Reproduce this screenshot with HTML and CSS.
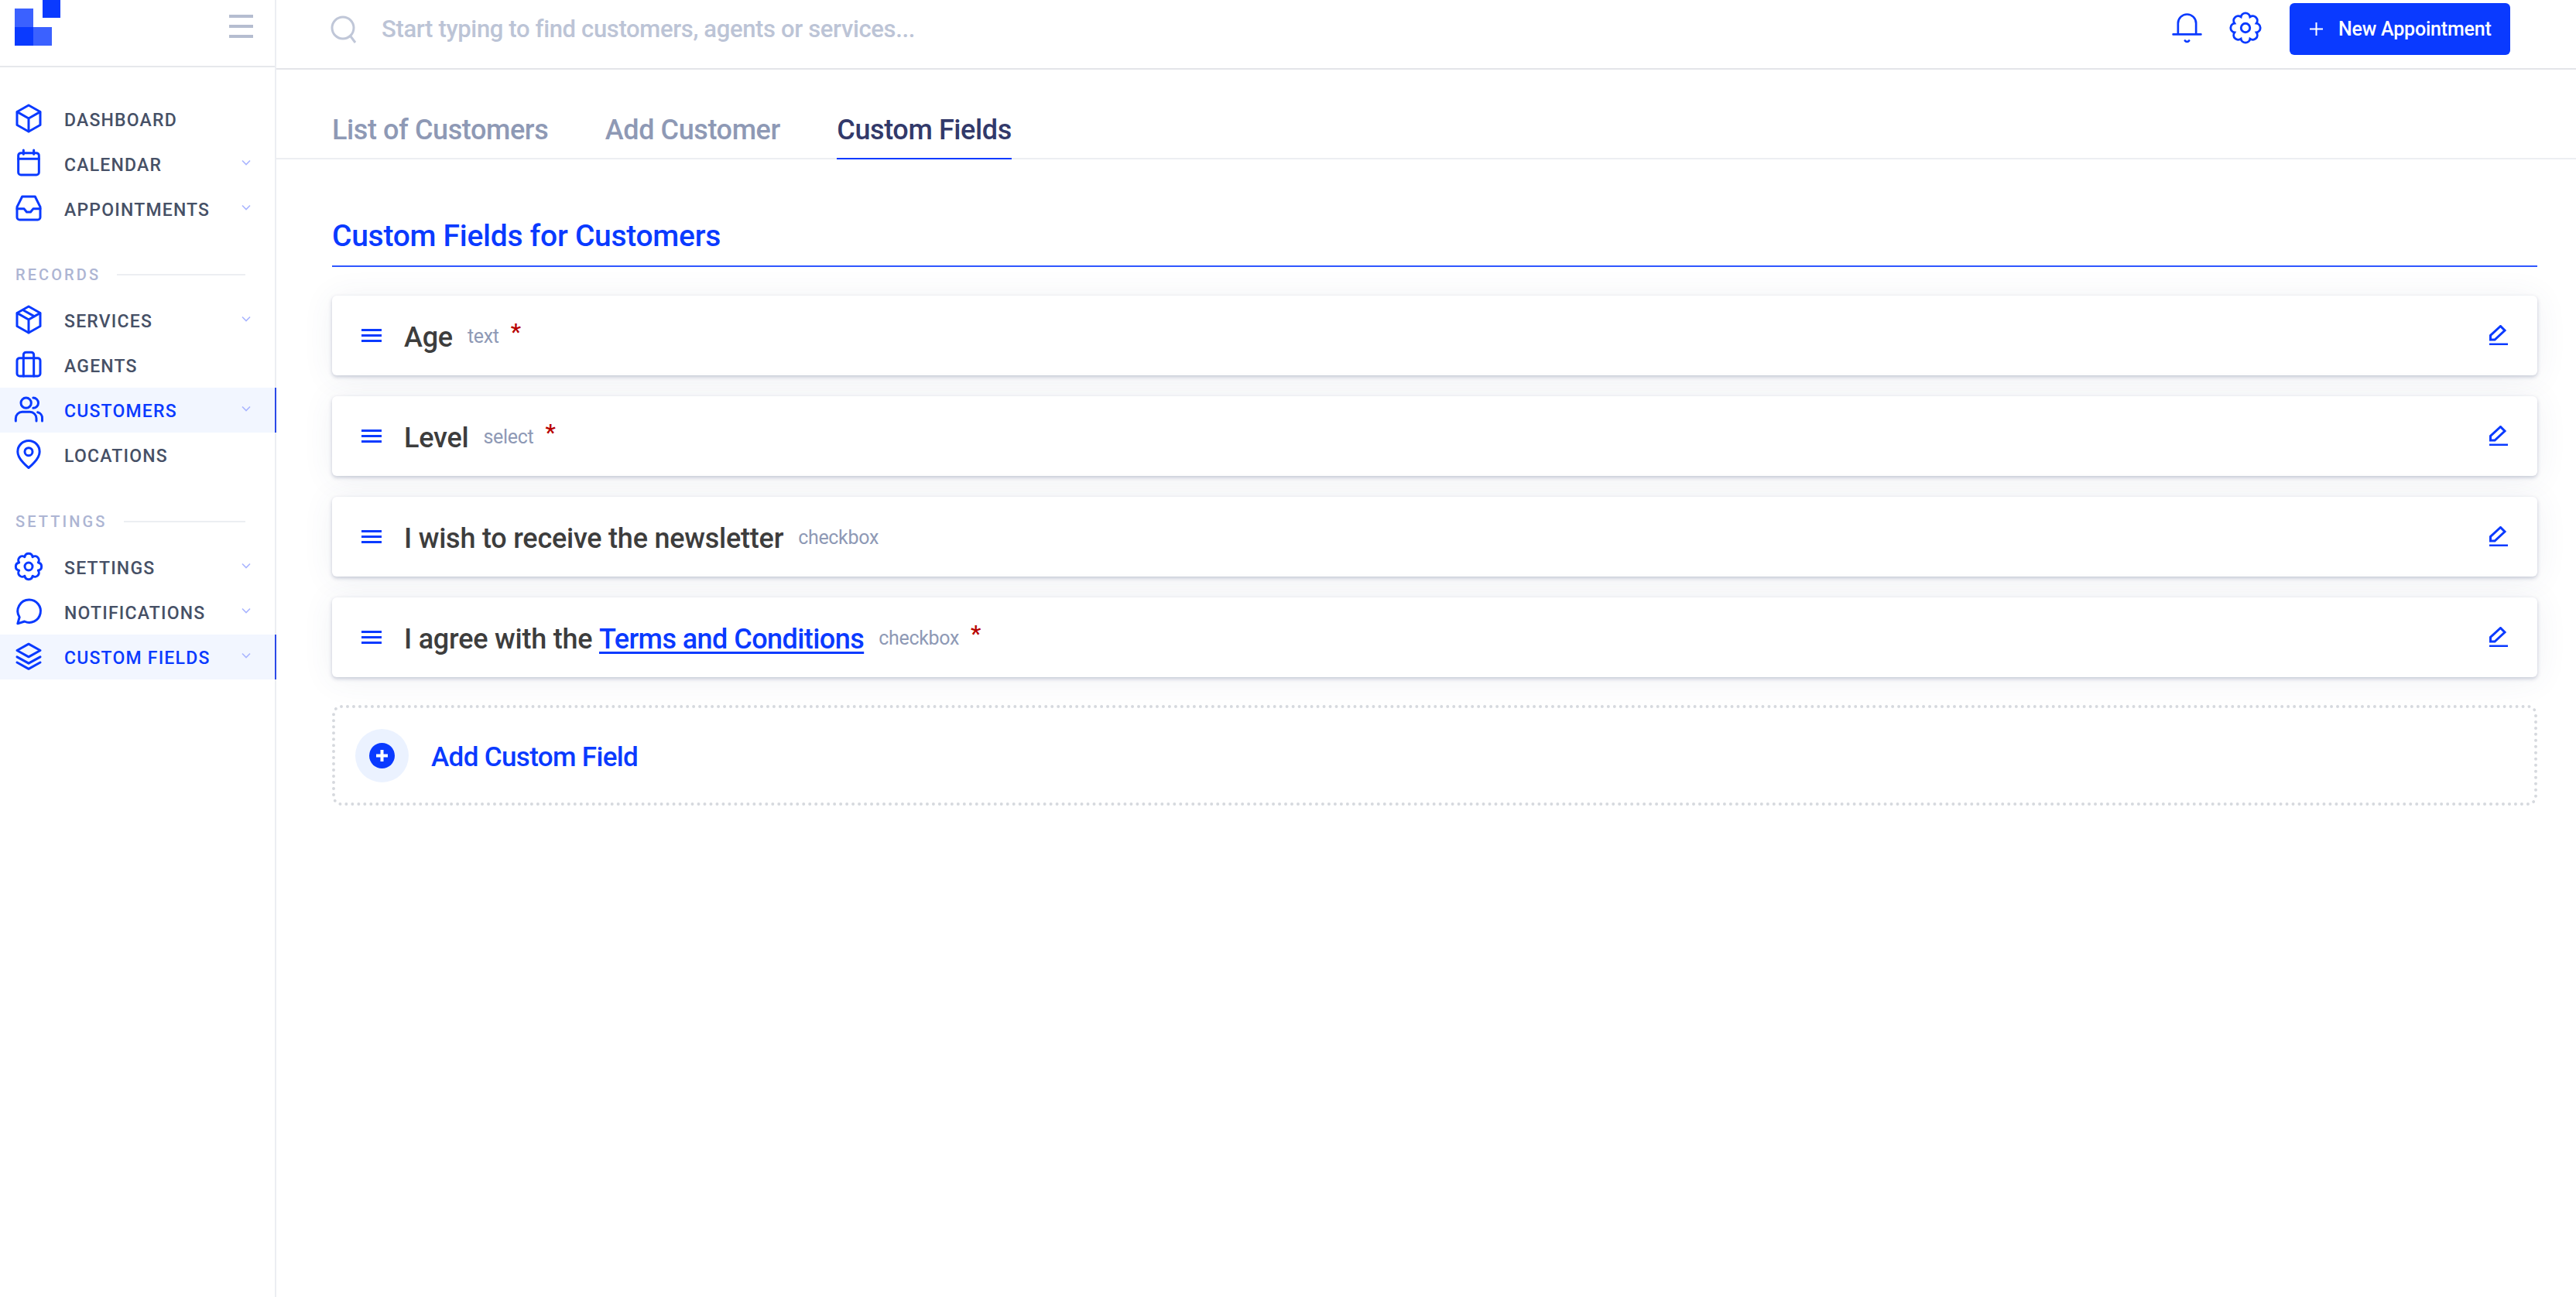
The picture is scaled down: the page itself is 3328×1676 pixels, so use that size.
FILE: index.html
```html
<!DOCTYPE html>
<html lang="en">
<head>
<meta charset="utf-8">
<title>Custom Fields for Customers</title>
<link rel="stylesheet" href="styles.css">
</head>
<body>
<svg class="defs" width="0" height="0" aria-hidden="true">
  <symbol id="i-gear" viewBox="0 0 24 24"><path d="M8.94 4.61A3.1 3.1 0 0 1 15.06 4.61A3.1 3.1 0 0 1 19.39 8.94A3.1 3.1 0 0 1 19.39 15.06A3.1 3.1 0 0 1 15.06 19.39A3.1 3.1 0 0 1 8.94 19.39A3.1 3.1 0 0 1 4.61 15.06A3.1 3.1 0 0 1 4.61 8.94A3.1 3.1 0 0 1 8.94 4.61z"/><circle cx="12" cy="12" r="3"/></symbol>
  <symbol id="i-chev" viewBox="0 0 12 8"><path d="M1 1.5l5 5 5-5"/></symbol>
  <symbol id="i-menu" viewBox="0 0 26 17"><path d="M0 1.5h26M0 8.5h26M0 15.5h26"/></symbol>
  <symbol id="i-edit" viewBox="0 0 24 26"><path d="M1.5 18.5v-5L14.5 1.5l5.5 5.5L7 19H1.5z"/><path d="M0 25h24"/></symbol>
</svg>
<aside class="sidebar">
  <div class="brand">
    <svg class="logo" width="60" height="60" viewBox="0 0 60 60"><rect x="19" y="11" width="24" height="24" fill="#0a3aff" opacity=".8"/><rect x="55" y="0" width="23" height="23" fill="#0a3aff"/><rect x="19" y="35" width="24" height="24" fill="#0a3aff"/><rect x="43" y="35" width="24" height="24" fill="#0a3aff" opacity=".8"/></svg>
    <div class="burger"><span></span><span></span><span></span></div>
  </div>
  <nav class="nav">
    <a class="item"><svg class="ico" viewBox="0 0 24 24"><path d="M12 1.800l9 5.100v10.200l-9 5.100-9-5.100V6.900z"/><path d="M3.200 7L12 12l8.800-5M12 12v10"/></svg><span>DASHBOARD</span></a>
    <a class="item"><svg class="ico" viewBox="0 0 24 24"><rect x="4" y="4" width="16" height="17" rx="2"/><path d="M4 8.500h16M8 1.800V5M16 1.800V5"/></svg><span>CALENDAR</span><svg class="chev"><use href="#i-chev"/></svg></a>
    <a class="item"><svg class="ico" viewBox="0 0 24 24"><path d="M7 3h10l4 8v8a2 2 0 0 1-2 2H5a2 2 0 0 1-2-2v-8z"/><path d="M3 12.500h5.500l2 2.500h3l2-2.500H21"/></svg><span>APPOINTMENTS</span><svg class="chev"><use href="#i-chev"/></svg></a>
    <div class="section section-records"><span>RECORDS</span><i></i></div>
    <a class="item"><svg class="ico" viewBox="0 0 24 24"><path d="M12 1.800l9 5.100v10.200l-9 5.100-9-5.100V6.900z"/><path d="M3.200 7L12 12l8.800-5M12 12v10M7.500 4.500l9 5"/></svg><span>SERVICES</span><svg class="chev"><use href="#i-chev"/></svg></a>
    <a class="item"><svg class="ico" viewBox="0 0 24 24"><rect x="3" y="7" width="18" height="14" rx="2"/><path d="M8 7V4.500A2 2 0 0 1 10 2.500h4a2 2 0 0 1 2 2V7M8 7v14M16 7v14"/></svg><span>AGENTS</span></a>
    <a class="item active"><svg class="ico" viewBox="0 0 24 24"><circle cx="10" cy="7" r="4"/><path d="M2 21v-2a5 5 0 0 1 5-5h6a5 5 0 0 1 5 5v2M15.500 3a4 4 0 0 1 0 8M19 14.300a4.500 4.500 0 0 1 3.500 4.700v2"/></svg><span>CUSTOMERS</span><svg class="chev"><use href="#i-chev"/></svg></a>
    <a class="item"><svg class="ico" viewBox="0 0 24 24"><path d="M12 22.500S20.500 16 20.500 10a8.500 8.500 0 1 0-17 0c0 6 8.500 12.500 8.500 12.500z"/><circle cx="12" cy="10" r="3"/></svg><span>LOCATIONS</span></a>
    <div class="section section-settings"><span>SETTINGS</span><i></i></div>
    <a class="item"><svg class="ico"><use href="#i-gear"/></svg><span>SETTINGS</span><svg class="chev"><use href="#i-chev"/></svg></a>
    <a class="item"><svg class="ico" viewBox="0 0 24 24"><path d="M12.500 3a8.800 8.800 0 1 1-3.700 16.800L3.500 21.500l1.400-5A8.800 8.800 0 0 1 12.500 3z"/></svg><span>NOTIFICATIONS</span><svg class="chev"><use href="#i-chev"/></svg></a>
    <a class="item active"><svg class="ico" viewBox="0 0 24 24"><path d="M12 2.500l9 5-9 5-9-5z"/><path d="M3 12.500l9 5 9-5M3 16.800l9 5 9-5"/></svg><span>CUSTOM FIELDS</span><svg class="chev"><use href="#i-chev"/></svg></a>
  </nav>
</aside>
<div class="main">
  <header class="topbar">
    <svg class="search-ico" viewBox="0 0 38 36"><circle cx="17" cy="16" r="14"/><path d="M27 27l6 8"/></svg>
    <span class="search-text">Start typing to find customers, agents or services...</span>
    <svg class="bell" viewBox="0 0 24 24"><path d="M5.500 16.500V9a6.500 6.500 0 0 1 13 0v7.500"/><path d="M2 17h20M10.500 21.500a1.800 1.800 0 0 0 3 0"/></svg>
    <svg class="gear-top"><use href="#i-gear"/></svg>
    <button class="cta"><svg class="cta-plus" viewBox="0 0 17 17"><path d="M8.500 0v17M0 8.500h17"/></svg>New Appointment</button>
  </header>
  <div class="tabs">
    <a class="tab">List of Customers</a>
    <a class="tab">Add Customer</a>
    <a class="tab current">Custom Fields</a>
  </div>
  <section class="content">
    <h1 class="title">Custom Fields for Customers</h1>
    <div class="card"><svg class="handle"><use href="#i-menu"/></svg><span class="name">Age</span><span class="type">text</span><span class="req">*</span><svg class="edit"><use href="#i-edit"/></svg></div>
    <div class="card"><svg class="handle"><use href="#i-menu"/></svg><span class="name">Level</span><span class="type">select</span><span class="req">*</span><svg class="edit"><use href="#i-edit"/></svg></div>
    <div class="card"><svg class="handle"><use href="#i-menu"/></svg><span class="name">I wish to receive the newsletter</span><span class="type">checkbox</span><svg class="edit"><use href="#i-edit"/></svg></div>
    <div class="card"><svg class="handle"><use href="#i-menu"/></svg><span class="name">I agree with the <a class="link">Terms and Conditions</a></span><span class="type">checkbox</span><span class="req">*</span><svg class="edit"><use href="#i-edit"/></svg></div>
    <div class="add">
      <span class="add-circle"><svg class="add-ico" viewBox="0 0 33 33"><circle cx="16.500" cy="16.500" r="16.500"/><path d="M16.500 9v15M9 16.500h15"/></svg></span>
      <span class="add-text">Add Custom Field</span>
    </div>
  </section>
</div>
</body>
</html>
```
FILE: styles.css
```css
* { box-sizing: border-box; }
html, body { margin: 0; height: 100%; }
body {
  display: flex;
  min-height: 1676px;
  background: #fff;
  font-family: Roboto, "Liberation Sans", sans-serif;
  color: #3f4a5f;
  overflow: hidden;
}
.defs { position: absolute; }
svg { fill: none; stroke: #0a3aff; flex: none; }

.sidebar { width: 357px; flex: none; border-right: 2px solid #eceef2; }
.brand {
  height: 87px;
  border-bottom: 2px solid #e6e8ec;
  display: flex;
  align-items: flex-start;
  justify-content: space-between;
  padding-right: 28px;
}
.logo { stroke: none; overflow: visible; }
.burger { display: flex; flex-direction: column; gap: 9px; padding-top: 19px; }
.burger span { display: block; width: 31px; height: 4px; background: #b5bdd0; }

.nav { padding-top: 38px; }
.item {
  height: 58px;
  display: flex;
  align-items: center;
  padding: 2px 0 0 17px;
  font-size: 23px;
  font-weight: 500;
  letter-spacing: 1.2px;
  color: #465066;
}
.ico { width: 40px; height: 40px; stroke-width: 1.8; stroke-linejoin: round; stroke-linecap: round; margin-right: 26px; position: relative; top: -2px; }
.chev { width: 12px; height: 8px; margin-left: auto; margin-right: 31px; stroke: #a9b5ff; stroke-width: 1.6; position: relative; top: -3px; }
.item.active { background: #f2f6ff; color: #0a3aff; box-shadow: inset -2px 0 0 #2b4ae8; margin-right: -2px; }
.item.active .chev { margin-right: 33px; }
.section {
  display: flex;
  align-items: center;
  gap: 21px;
  padding: 46px 38px 20px 20px;
  font-size: 20px;
  line-height: 20px;
  letter-spacing: 3.1px;
  font-weight: 500;
  color: #adb5d3;
}
.section-settings { padding-top: 47px; }
.section i { flex: 1; height: 2px; background: #eceef2; }

.main { flex: 1; min-width: 0; display: flex; flex-direction: column; }
.topbar {
  height: 90px;
  border-bottom: 2px solid #e3e5e9;
  display: flex;
  align-items: flex-start;
  padding: 0 85px 0 69px;
}
.search-ico { width: 38px; height: 36px; stroke: #c0c7d8; stroke-width: 3; margin-top: 20px; }
.search-text { margin-left: 29px; margin-top: 20px; font-size: 31px; line-height: 36px; font-weight: 500; letter-spacing: -.35px; color: #bcc4d6; }
.bell { width: 43px; height: 43px; stroke-width: 1.5; stroke-linecap: round; margin-left: auto; margin-top: 14px; }
.gear-top { width: 46px; height: 46px; stroke-width: 1.5; margin-left: 31px; margin-top: 13px; }
.cta {
  width: 285px;
  height: 67px;
  margin: 4px 0 0 34px;
  border: 0;
  border-radius: 6px;
  background: #0a3aff;
  color: #fff;
  font: 500 25px Roboto, "Liberation Sans", sans-serif;
  letter-spacing: -.2px;
  display: flex;
  align-items: center;
  padding: 0 0 0 26px;
}
.cta-plus { width: 17px; height: 17px; stroke: #fff; stroke-width: 2; margin-right: 20px; }

.tabs { display: flex; gap: 73.5px; padding: 0 72px; height: 116px; border-bottom: 2px solid #eceef2; align-items: flex-end; }
.tab {
  height: 100%;
  display: flex;
  align-items: center;
  padding-top: 39px;
  margin-bottom: -2px;
  border-bottom: 2px solid transparent;
  font-size: 36px;
  font-weight: 500;
  letter-spacing: -.4px;
  color: #8e99b5;
}
.tab.current { color: #32396a; border-bottom-color: #0a3aff; }

.content { padding: 0 50px 0 72px; }
.title {
  margin: 0 0 37px;
  height: 139px;
  padding-top: 74px;
  border-bottom: 2px solid #2f57ff;
  font-size: 39px;
  line-height: 50px;
  font-weight: 500;
  letter-spacing: -.28px;
  color: #0a3aff;
}
.card {
  height: 103px;
  margin-bottom: 27px;
  background: #fff;
  border-radius: 6px;
  display: flex;
  align-items: center;
  padding: 0 38px 0 38px;
  box-shadow: 0 2px 5px rgba(60, 75, 120, .28), 0 3px 40px rgba(60, 75, 120, .08);
}
.handle { width: 26px; height: 17px; stroke-width: 3; margin-right: 29px; }
.name { font-size: 36px; font-weight: 500; letter-spacing: -.23px; color: #3d3d3d; white-space: nowrap; position: relative; top: 2px; }
.link { color: #0a3aff; letter-spacing: -.56px; text-decoration: underline; text-decoration-thickness: 3px; text-underline-offset: 4px; }
.type { margin-left: 19px; font-size: 25px; letter-spacing: -.3px; color: #8e99b5; position: relative; top: 1px; }
.req { margin-left: 15px; font-size: 30px; font-weight: 500; color: #b80000; position: relative; top: -5px; }
.edit { width: 24px; height: 26px; stroke-width: 3; margin-left: auto; position: relative; top: -1px; }

.add {
  height: 130px;
  margin-top: 36px;
  padding-left: 26px;
  border: 4px dotted #d6d9de;
  border-radius: 12px;
  display: flex;
  align-items: center;
}
.add-circle { width: 69px; height: 69px; border-radius: 50%; background: #ebf2ff; display: flex; align-items: center; justify-content: center; margin-right: 30px; }
.add-ico { width: 33px; height: 33px; stroke: none; }
.add-ico circle { fill: #0a3aff; }
.add-ico path { stroke: #fff; stroke-width: 4; }
.add-text { font-size: 35px; font-weight: 500; letter-spacing: -.65px; color: #0a3aff; position: relative; top: 2px; left: -1px; }
```
